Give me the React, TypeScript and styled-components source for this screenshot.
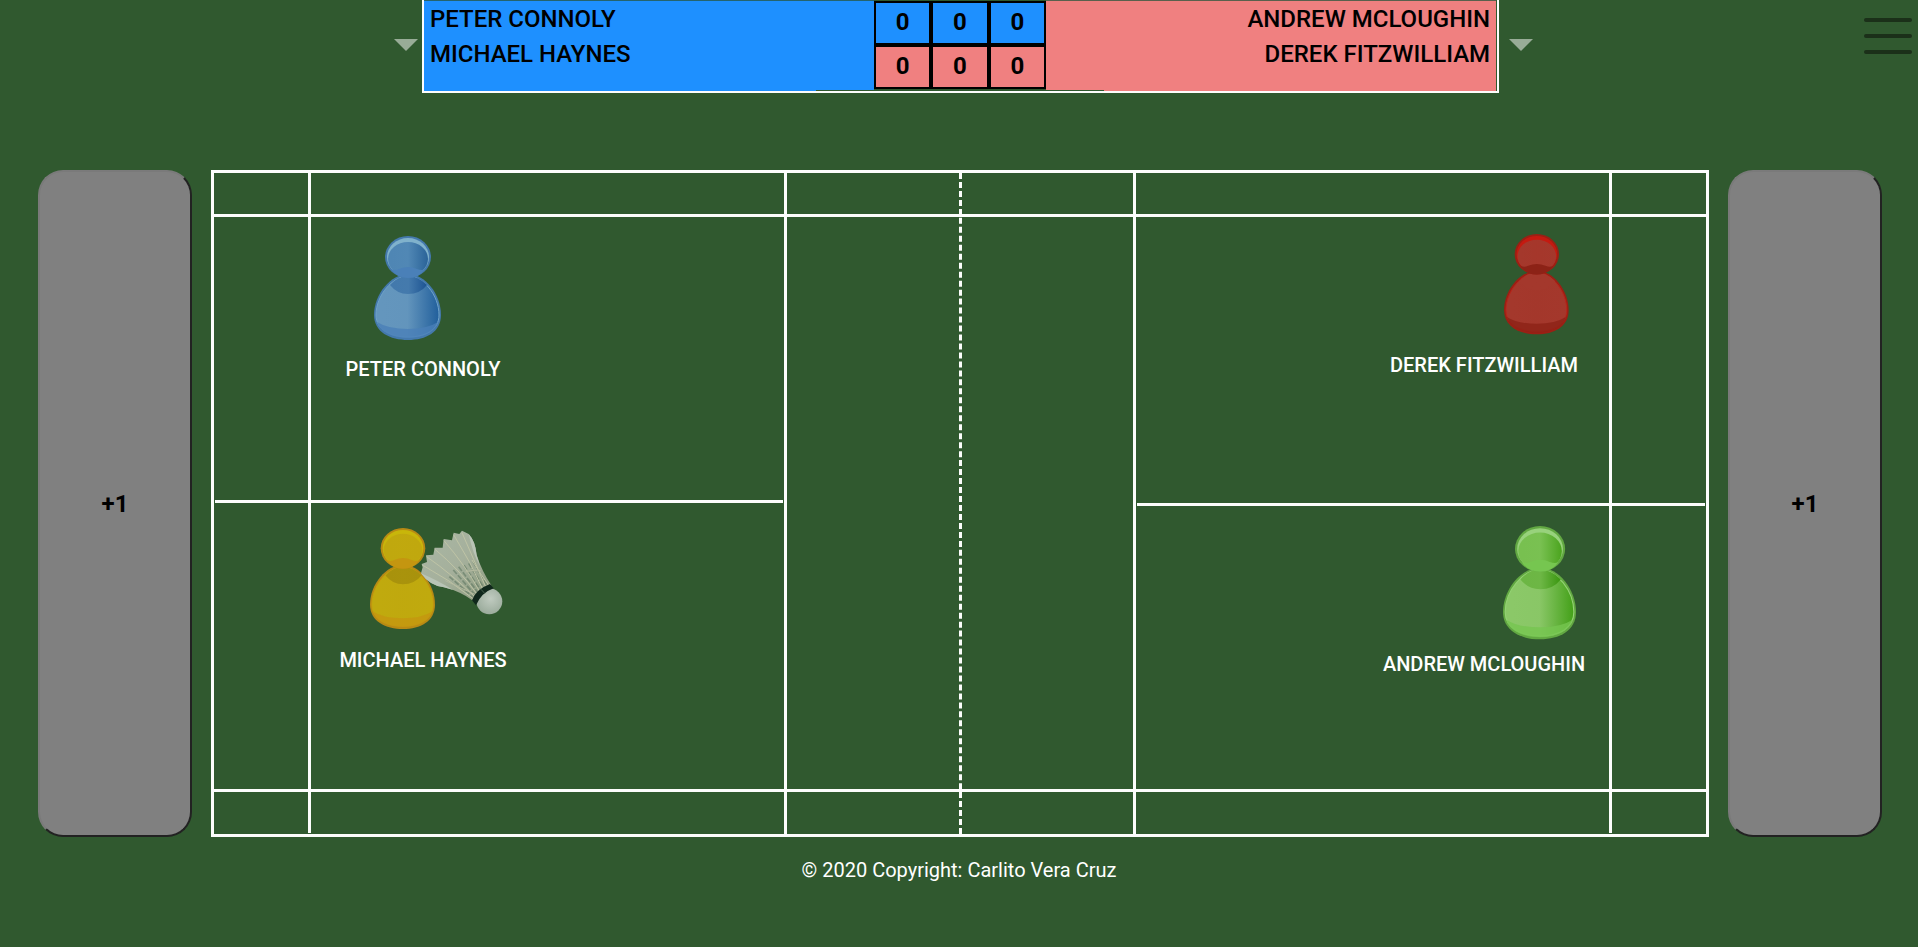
import React from 'react';
import styled, { createGlobalStyle } from 'styled-components';

const GREEN = '#30592f';
const LINE = '#fcfdfc';
const BLUE = '#1e90ff';
const CORAL = '#f08080';

const GlobalStyle = createGlobalStyle`
  *, *::before, *::after { box-sizing: border-box; }
  body {
    margin: 0;
    background: ${GREEN};
    font-family: Roboto, sans-serif;
  }
`;

const Page = styled.div`
  display: flex;
  flex-direction: column;
  min-height: 100vh;
`;

const Header = styled.header`
  display: grid;
  grid-template-columns: 22% 1fr calc(22% - 3px);
`;

const LeftSide = styled.div`
  display: flex;
  align-items: center;
  justify-content: flex-end;
  padding: 0 4px 3px 0;
`;

const RightSide = styled.div`
  display: flex;
  align-items: center;
  justify-content: space-between;
  padding: 0 6px 3px 10px;
`;

const IconButton = styled.button<{ $top?: boolean }>`
  display: block;
  padding: 0;
  border: 0;
  background: none;
  cursor: pointer;
  align-self: ${(p) => (p.$top ? 'flex-start' : 'center')};
  margin-top: ${(p) => (p.$top ? '18px' : '0')};

  svg { display: block; }
`;

const Board = styled.div`
  display: grid;
  grid-template-columns: 1fr 172px 1fr;
  padding-right: 1px;
  border: solid ${LINE};
  border-width: 0 2px 2px;
`;

const Team = styled.div<{ $color: string; $align: 'left' | 'right' }>`
  padding: 1px 6px 0;
  border-top: 1px solid rgba(40, 85, 60, 0.75);
  background: ${(p) => p.$color};
  color: #000;
  font-size: 24px;
  font-weight: 500;
  line-height: 35px;
  text-align: ${(p) => p.$align};
`;

const Scores = styled.div`
  position: relative;
  padding: 1px 0 2px;

  &::after {
    content: '';
    position: absolute;
    right: -58px;
    bottom: 0;
    left: -58px;
    height: 1px;
    background: ${GREEN};
  }
`;

const ScoreTable = styled.table`
  width: 100%;
  border-spacing: 0;
  table-layout: fixed;
`;

const ScoreCell = styled.td<{ $color: string }>`
  height: 44px;
  padding: 0 0 2px;
  border: 2px solid #000;
  background: ${(p) => p.$color};
  color: #000;
  font-size: 24px;
  font-weight: 700;
  line-height: 28px;
  text-align: center;
`;

const Main = styled.main`
  display: grid;
  flex: 1;
  grid-template-columns: 154px 1fr 154px;
  gap: 19px;
  padding: 77px 36px 0 38px;
`;

const PointButton = styled.button`
  border: 2px solid;
  border-color: #7a7a7a #222 #222 #7a7a7a;
  border-radius: 25px;
  background: #808080;
  color: #000;
  font-family: inherit;
  font-size: 24px;
  font-weight: 700;
  cursor: pointer;
`;

const Court = styled.section`
  display: grid;
  grid-template-columns: 94fr 3px 473fr 3px 172fr 3px 171fr 3px 473fr 3px 94fr;
  grid-template-rows: 41px 3px 1fr 3px 3px 1fr 3px 42px;
  border: 3px solid ${LINE};
`;

const VerticalLine = styled.div<{ $column: number; $short?: boolean }>`
  grid-row: 1 / -1;
  grid-column: ${(p) => p.$column};
  margin-bottom: ${(p) => (p.$short ? '1px' : '0')};
  background: ${LINE};
`;

const Net = styled.div`
  grid-row: 1 / -1;
  grid-column: 6;
  border-left: 3px dashed ${LINE};
`;

const HorizontalLine = styled.div<{ $row: number; $columns?: string }>`
  grid-row: ${(p) => p.$row};
  grid-column: ${(p) => p.$columns || '1 / -1'};
  margin: ${(p) => (p.$columns ? '0 1px' : '0')};
  background: ${LINE};
`;

const PlayerBox = styled.figure<{ $side: Side; $half: Half }>`
  display: flex;
  flex-direction: column;
  align-items: center;
  gap: 18px;
  grid-row: ${(p) => (p.$half === 'top' ? 3 : 6)};
  grid-column: ${(p) => (p.$side === 'left' ? 3 : 9)};
  justify-self: ${(p) => (p.$side === 'left' ? 'start' : 'end')};
  width: ${(p) => (p.$side === 'left' ? '224px' : '250px')};
  margin: 0;
  padding-top: ${(p) => (p.$half === 'top' ? '16px' : '20px')};

  svg {
    display: block;
    overflow: visible;
  }
`;

const PlayerName = styled.figcaption`
  color: #fff;
  font-size: 20px;
  font-weight: 500;
  line-height: 24px;
  white-space: nowrap;
`;

const Footer = styled.footer`
  height: 110px;
  padding-top: 19px;
  color: #fff;
  font-size: 20px;
  line-height: 28px;
  text-align: center;
`;

type Side = 'left' | 'right';
type Half = 'top' | 'bottom';

interface Palette {
  id: string;
  rim: string;
  edge: string;
  body: [string, string];
  neck: [string, string];
  head: [string, string];
  highlight: string;
  base: string;
}

const blue: Palette = {
  id: 'blue',
  rim: '#4479ac',
  edge: '#6fa3c8',
  body: ['#6496bd', '#215f9c'],
  neck: ['#4379ac', '#1d5492'],
  head: ['#4f86b4', '#2a6398'],
  highlight: '#80b2cc',
  base: '#4a80b8',
};

const green: Palette = {
  id: 'green',
  rim: '#62a842',
  edge: '#94d274',
  body: ['#8bc868', '#43a018'],
  neck: ['#6cb644', '#3a9610'],
  head: ['#78c050', '#4ba41e'],
  highlight: '#98d27c',
  base: '#76c650',
};

const yellow: Palette = {
  id: 'yellow',
  rim: '#b88a14',
  edge: '#c4a40c',
  body: ['#c0aa0e', '#c0aa0e'],
  neck: ['#a8920c', '#a8920c'],
  head: ['#c0a80e', '#c0a80e'],
  highlight: '#c8b60a',
  base: '#c49610',
};

const red: Palette = {
  id: 'red',
  rim: '#9a2014',
  edge: '#b8241a',
  body: ['#a4382c', '#a4382c'],
  neck: ['#a4382c', '#a4382c'],
  head: ['#a4382c', '#a4382c'],
  highlight: '#c41a10',
  base: '#8c2216',
};

const Gradient = ({ id, stops }: { id: string; stops: [string, string] }) => (
  <linearGradient id={id}>
    <stop offset="0.1" stopColor={stops[0]} />
    <stop offset="0.5" stopColor={stops[0]} stopOpacity="0.96" />
    <stop offset="1" stopColor={stops[1]} />
  </linearGradient>
);

const BODY = 'M34 38 C51 38 67 58 67 79 C67 96 52 104 34 104 C16 104 0 96 0 79 C0 58 17 38 34 38Z';

const Pawn = ({ palette: c, x, y, scale }: { palette: Palette; x: number; y: number; scale: number }) => (
  <g transform={`translate(${x} ${y}) scale(${scale})`}>
    <defs>
      <Gradient id={`${c.id}-body`} stops={c.body} />
      <Gradient id={`${c.id}-neck`} stops={c.neck} />
      <Gradient id={`${c.id}-head`} stops={c.head} />
    </defs>
    <path d={BODY} fill={c.rim} />
    <path
      d="M34 40 C49 40 65 59 65 79 C65 94 51 101 34 101 C17 101 2 94 2 79 C2 59 19 40 34 40Z"
      fill={`url(#${c.id}-body)`}
      stroke={c.edge}
    />
    <path d="M3 86 Q14 93 34 93 Q53 93 64 86 C61 96 50 102 34 102 C18 102 6 96 3 86Z" fill={c.base} fillOpacity="0.8" />
    <path d="M16 49 Q24 40 34 40 Q44 40 53 49 Q46 58 34 58 Q23 58 16 49Z" fill={`url(#${c.id}-neck)`} />
    <ellipse cx="34" cy="21" rx="23" ry="21" fill={c.rim} />
    <ellipse cx="34" cy="21" rx="21" ry="19" fill={c.highlight} />
    <ellipse cx="34" cy="23" rx="20" ry="17" fill={`url(#${c.id}-head)`} />
    <path d="M17 33 Q21 35 25 33 Q34 29 43 33 Q48 35 51 33 Q45 42 34 42 Q23 42 17 33Z" fill={c.base} />
  </g>
);

const Shuttlecock = () => (
  <g transform="translate(-3 -46) scale(0.3333)">
    <defs>
      <linearGradient id="feathers" x1="0" y1="0" x2="1" y2="1">
        <stop offset="0" stopColor="#a9b7a4" />
        <stop offset="0.5" stopColor="#a5b09c" />
        <stop offset="1" stopColor="#8c9b7e" />
      </linearGradient>
      <radialGradient id="cork" cx="0.55" cy="0.4" r="0.65">
        <stop offset="0" stopColor="#c0cbc0" />
        <stop offset="1" stopColor="#98a999" />
      </radialGradient>
    </defs>
    <path
      d="M303 280 L308 262 L305 252 L321 246 L318 226 L340 224 L344 203 L368 203 L371 177 L396 181 L401 158 L418 162 L426 152 L446 162 Q466 183 470 225 Q486 274 514 316 L459 362 Q420 334 372 322 Q330 318 303 280Z"
      fill="url(#feathers)"
    />
    <path
      d="M446 162 Q466 183 470 225 L480 258 Q458 220 446 162Z M303 280 Q330 318 372 322 L400 330 Q350 300 303 280Z"
      fill="#b9c4b6"
    />
    <g stroke="#55705a" strokeWidth="5" strokeDasharray="16 5" opacity="0.5">
      <path d="M400 270 L466 346 M416 260 L474 338 M432 256 L483 332 M446 250 L493 326 M460 246 L503 320 M388 290 L460 352" />
    </g>
    <g stroke="#bfc4a6" strokeWidth="3" fill="none">
      <path d="M307 255 Q390 300 461 357" />
      <path d="M320 230 Q400 286 466 352" />
      <path d="M344 207 Q420 270 473 345" />
      <path d="M372 182 Q436 256 481 338" />
      <path d="M401 164 Q452 246 490 331" />
      <path d="M426 158 Q460 236 499 325" />
      <path d="M456 240 Q480 280 508 319" />
    </g>
    <path d="M376 302 L466 344 M436 276 Q466 268 482 272" stroke="#b5baa0" strokeWidth="3" fill="none" />
    <circle cx="508" cy="364" r="39" fill="url(#cork)" />
    <path d="M510 312 L521 325 Q484 338 468 376 L456 361 Q468 328 510 312Z" fill="#10281c" />
    <path d="M483 328 L494 340" stroke="#46604c" strokeWidth="3" />
  </g>
);

interface PlayerData {
  name: string;
  side: Side;
  half: Half;
  palette: Palette;
  artHeight: number;
  x: number;
  y: number;
  scale: number;
  serving?: boolean;
}

const players: PlayerData[] = [
  { name: 'PETER CONNOLY', side: 'left', half: 'top', palette: blue, artHeight: 106, x: 51, y: 3, scale: 1 },
  { name: 'DEREK FITZWILLIAM', side: 'right', half: 'top', palette: red, artHeight: 102, x: 120, y: 1, scale: 0.965 },
  { name: 'MICHAEL HAYNES', side: 'left', half: 'bottom', palette: yellow, artHeight: 104, x: 47, y: 2, scale: 0.97, serving: true },
  { name: 'ANDREW MCLOUGHIN', side: 'right', half: 'bottom', palette: green, artHeight: 108, x: 119, y: 0, scale: 1.09 },
];

const Player = ({ player: p }: { player: PlayerData }) => (
  <PlayerBox $side={p.side} $half={p.half}>
    <svg width="200" height={p.artHeight} viewBox={`0 0 200 ${p.artHeight}`} aria-hidden="true">
      <Pawn palette={p.palette} x={p.x} y={p.y} scale={p.scale} />
      {p.serving && <Shuttlecock />}
    </svg>
    <PlayerName>{p.name}</PlayerName>
  </PlayerBox>
);

const Caret = ({ label }: { label: string }) => (
  <IconButton type="button" aria-label={label}>
    <svg width="24" height="12" viewBox="0 0 24 12">
      <path d="M0 0 H24 L12 12Z" fill="#98ac97" />
    </svg>
  </IconButton>
);

const scoreRows = [
  { color: BLUE, sets: [0, 0, 0] },
  { color: CORAL, sets: [0, 0, 0] },
];

export default function App() {
  return (
    <>
      <GlobalStyle />
      <Page>
        <Header>
          <LeftSide>
            <Caret label="Left team options" />
          </LeftSide>
          <Board>
            <Team $color={BLUE} $align="left">
              <div>PETER CONNOLY</div>
              <div>MICHAEL HAYNES</div>
            </Team>
            <Scores>
              <ScoreTable>
                <tbody>
                  {scoreRows.map((row) => (
                    <tr key={row.color}>
                      {row.sets.map((score, i) => (
                        <ScoreCell key={i} $color={row.color}>{score}</ScoreCell>
                      ))}
                    </tr>
                  ))}
                </tbody>
              </ScoreTable>
            </Scores>
            <Team $color={CORAL} $align="right">
              <div>ANDREW MCLOUGHIN</div>
              <div>DEREK FITZWILLIAM</div>
            </Team>
          </Board>
          <RightSide>
            <Caret label="Right team options" />
            <IconButton type="button" aria-label="Menu" $top>
              <svg width="48" height="36" viewBox="0 0 48 36" fill="#1b3019">
                <rect width="48" height="4" rx="2" />
                <rect y="16" width="48" height="4" rx="2" />
                <rect y="32" width="48" height="4" rx="2" />
              </svg>
            </IconButton>
          </RightSide>
        </Header>
        <Main>
          <PointButton type="button">+1</PointButton>
          <Court>
            <VerticalLine $column={2} $short />
            <VerticalLine $column={4} />
            <Net />
            <VerticalLine $column={8} />
            <VerticalLine $column={10} $short />
            <HorizontalLine $row={2} />
            <HorizontalLine $row={4} $columns="1 / 4" />
            <HorizontalLine $row={5} $columns="9 / -1" />
            <HorizontalLine $row={7} />
            {players.map((p) => (
              <Player key={p.name} player={p} />
            ))}
          </Court>
          <PointButton type="button">+1</PointButton>
        </Main>
        <Footer>© 2020 Copyright: Carlito Vera Cruz</Footer>
      </Page>
    </>
  );
}
